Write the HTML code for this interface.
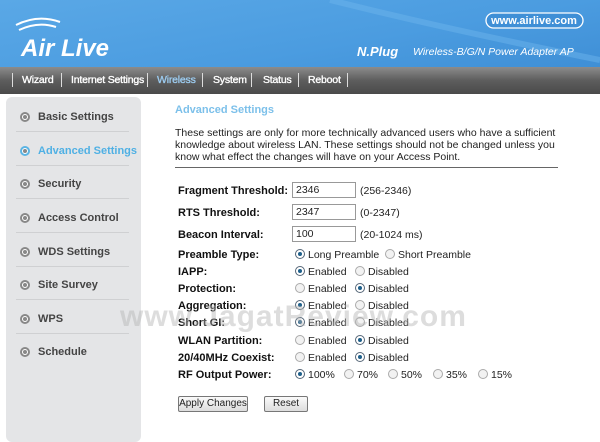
<!DOCTYPE html>
<html><head><meta charset="utf-8"><style>
*{margin:0;padding:0;box-sizing:border-box}
body{width:600px;height:436px;overflow:hidden;background:#fff;font-family:"Liberation Sans",Arial,sans-serif;position:relative;font-size:11px;color:#222}
.hdr{position:absolute;left:0;top:0;width:600px;height:67px;background:linear-gradient(170deg,#5aa8e6 0%,#4b9ce0 60%,#3f8fd6 100%)}
.nav{position:absolute;left:0;top:67px;width:600px;height:27px;background:linear-gradient(#8c8c8c,#5d5d5d 50%,#4a4a4a)}
.nav span{position:absolute;top:7px;color:#fff;font-size:10.5px;font-weight:normal;-webkit-text-stroke:0.35px #fff;letter-spacing:-0.2px;white-space:nowrap}
.nav b{position:absolute;top:6px;width:1px;height:14px;background:#ddd}
.side{position:absolute;left:6px;top:97px;width:135px;height:345px;background:#e4e5e7;border-radius:6px}
.si{position:absolute;left:38px;font-size:11px;font-weight:bold;color:#444}
.dot{position:absolute;left:20px;width:10px;height:10px;border-radius:50%;border:2px solid #888;background:#fff}
.dot::after{content:"";position:absolute;left:1px;top:1px;width:4px;height:4px;border-radius:50%;background:#888}
.sep{position:absolute;left:16px;width:113px;height:1px;background:#cfd0d2}
.lbl{position:absolute;left:178px;font-weight:bold;font-size:11px;color:#111}
.inp{position:absolute;left:292px;width:64px;height:16px;border:1px solid #999;background:#fff;font-size:10.5px;padding:1px 3px}
.r{position:absolute;font-size:10.5px;color:#222;white-space:nowrap}
.r i{display:inline-block;width:10px;height:10px;border-radius:50%;border:1px solid #aaa;background:#f2f2f2;vertical-align:-1px;margin-right:3px;position:relative}
.r i.on{background:#fff;border-color:#567}
.r i.on::after{content:"";position:absolute;left:2px;top:2px;width:4px;height:4px;border-radius:50%;background:#1e5f8a}
.btn{position:absolute;top:396px;height:16px;border:1px solid #777;background:linear-gradient(#fafafa,#ddd);font-size:10px;line-height:13px;text-align:center;border-radius:2px}
</style></head><body>
<div class="hdr">
<svg width="600" height="67" style="position:absolute;left:0;top:0">
<path d="M330 0 Q450 30 600 60" stroke="#6cb4ec" stroke-width="6" fill="none" opacity=".5"/>
<path d="M16 25 Q38 14 60 22" stroke="#fff" stroke-width="2" fill="none"/>
<path d="M19 30 Q38 21 56 27" stroke="#fff" stroke-width="2" fill="none"/>
<rect x="486" y="13" width="97" height="15" rx="7.5" fill="#3f8fd6" stroke="#fff" stroke-width="1.3"/>
<text x="534" y="24" fill="#fff" font-family="Liberation Sans" font-size="11" font-weight="bold" text-anchor="middle">www.airlive.com</text>
<text x="21" y="56" fill="#fff" font-family="Liberation Sans" font-size="24" font-weight="bold" font-style="italic">Air Live</text>
<text x="357" y="56" fill="#fff" font-family="Liberation Sans" font-size="13" font-weight="bold" font-style="italic">N.Plug</text>
<text x="413" y="55" fill="#fff" font-family="Liberation Sans" font-size="10.5" font-style="italic">Wireless-B/G/N Power Adapter AP</text>
</svg></div>
<div class="nav">
<b style="left:12px"></b><span style="left:22px">Wizard</span>
<b style="left:61px"></b><span style="left:71px">Internet Settings</span>
<b style="left:147px"></b><span style="left:157px;color:#9ccbef;-webkit-text-stroke:0.35px #9ccbef">Wireless</span>
<b style="left:202px"></b><span style="left:213px">System</span>
<b style="left:251px"></b><span style="left:263px">Status</span>
<b style="left:298px"></b><span style="left:308px">Reboot</span>
<b style="left:347px"></b>
</div>
<div class="side"></div>
<div class="dot" style="top:112px"></div><div class="si" style="top:111px">Basic Settings</div><div class="sep" style="top:131px"></div>
<div class="dot" style="top:146px;border-color:#5ab4e4"></div><div class="si" style="top:145px;color:#4fb0e4">Advanced Settings</div><div class="sep" style="top:165px"></div>
<div class="dot" style="top:179px"></div><div class="si" style="top:178px">Security</div><div class="sep" style="top:198px"></div>
<div class="dot" style="top:213px"></div><div class="si" style="top:212px">Access Control</div><div class="sep" style="top:232px"></div>
<div class="dot" style="top:247px"></div><div class="si" style="top:246px">WDS Settings</div><div class="sep" style="top:266px"></div>
<div class="dot" style="top:280px"></div><div class="si" style="top:279px">Site Survey</div><div class="sep" style="top:299px"></div>
<div class="dot" style="top:314px"></div><div class="si" style="top:313px">WPS</div><div class="sep" style="top:333px"></div>
<div class="dot" style="top:347px"></div><div class="si" style="top:346px">Schedule</div>

<div style="position:absolute;left:175px;top:104px;color:#7cc0ea;font-weight:bold;font-size:11px">Advanced Settings</div>
<div style="position:absolute;left:175px;top:127px;width:400px;font-size:10.5px;line-height:12px;color:#222">These settings are only for more technically advanced users who have a sufficient knowledge about wireless LAN. These settings should not be changed unless you know what effect the changes will have on your Access Point.</div>
<div style="position:absolute;left:175px;top:167px;width:383px;height:1px;background:#666"></div>

<div class="lbl" style="top:185px">Fragment Threshold:</div><div class="inp" style="top:182px">2346</div><div class="r" style="left:360px;top:185px">(256-2346)</div>
<div class="lbl" style="top:207px">RTS Threshold:</div><div class="inp" style="top:204px">2347</div><div class="r" style="left:360px;top:207px">(0-2347)</div>
<div class="lbl" style="top:229px">Beacon Interval:</div><div class="inp" style="top:226px">100</div><div class="r" style="left:360px;top:229px">(20-1024 ms)</div>
<div class="lbl" style="top:249px">Preamble Type:</div><div class="r" style="left:295px;top:249px"><i class="on"></i>Long Preamble</div><div class="r" style="left:385px;top:249px"><i></i>Short Preamble</div>
<div class="lbl" style="top:266px">IAPP:</div><div class="r" style="left:295px;top:266px"><i class="on"></i>Enabled</div><div class="r" style="left:355px;top:266px"><i></i>Disabled</div>
<div class="lbl" style="top:283px">Protection:</div><div class="r" style="left:295px;top:283px"><i></i>Enabled</div><div class="r" style="left:355px;top:283px"><i class="on"></i>Disabled</div>
<div class="lbl" style="top:300px">Aggregation:</div><div class="r" style="left:295px;top:300px"><i class="on"></i>Enabled</div><div class="r" style="left:355px;top:300px"><i></i>Disabled</div>
<div class="lbl" style="top:317px">Short GI:</div><div class="r" style="left:295px;top:317px"><i class="on"></i>Enabled</div><div class="r" style="left:355px;top:317px"><i></i>Disabled</div>
<div class="lbl" style="top:335px">WLAN Partition:</div><div class="r" style="left:295px;top:335px"><i></i>Enabled</div><div class="r" style="left:355px;top:335px"><i class="on"></i>Disabled</div>
<div class="lbl" style="top:352px">20/40MHz Coexist:</div><div class="r" style="left:295px;top:352px"><i></i>Enabled</div><div class="r" style="left:355px;top:352px"><i class="on"></i>Disabled</div>
<div class="lbl" style="top:369px">RF Output Power:</div>
<div class="r" style="left:295px;top:369px"><i class="on"></i>100%</div><div class="r" style="left:344px;top:369px"><i></i>70%</div><div class="r" style="left:388px;top:369px"><i></i>50%</div><div class="r" style="left:433px;top:369px"><i></i>35%</div><div class="r" style="left:478px;top:369px"><i></i>15%</div>
<div class="btn" style="left:178px;width:70px">Apply Changes</div><div class="btn" style="left:264px;width:44px">Reset</div>
<div style="position:absolute;left:120px;top:300px;font-size:30px;color:rgba(180,180,180,.45);font-weight:bold;letter-spacing:1px">www.JagatReview.com</div>
</body></html>
